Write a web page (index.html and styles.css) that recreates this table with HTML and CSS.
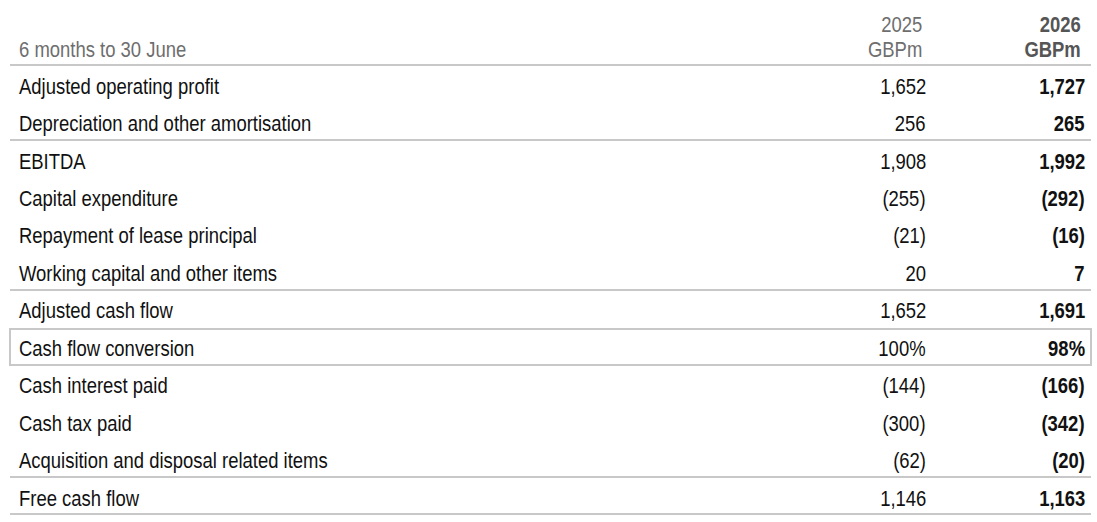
FILE: index.html
```html
<!DOCTYPE html>
<html>
<head>
<meta charset="utf-8">
<link rel="stylesheet" href="styles.css">
</head>
<body>
<div class="cf">
  <div class="row head">
    <div class="lbl"><span>6 months to 30 June</span></div>
    <div class="num prev"><span>2025<br>GBPm</span></div>
    <div class="num cur"><span>2026<br>GBPm</span></div>
  </div>
  <div class="row"><div class="lbl"><span>Adjusted operating profit</span></div><div class="num"><span>1,652</span></div><div class="num cur"><span>1,727</span></div></div>
  <div class="row sep"><div class="lbl"><span>Depreciation and other amortisation</span></div><div class="num"><span>256</span></div><div class="num cur"><span>265</span></div></div>
  <div class="row"><div class="lbl"><span>EBITDA</span></div><div class="num"><span>1,908</span></div><div class="num cur"><span>1,992</span></div></div>
  <div class="row"><div class="lbl"><span>Capital expenditure</span></div><div class="num"><span>(255)</span></div><div class="num cur"><span>(292)</span></div></div>
  <div class="row"><div class="lbl"><span>Repayment of lease principal</span></div><div class="num"><span>(21)</span></div><div class="num cur"><span>(16)</span></div></div>
  <div class="row sep"><div class="lbl"><span>Working capital and other items</span></div><div class="num"><span>20</span></div><div class="num cur"><span>7</span></div></div>
  <div class="row"><div class="lbl"><span>Adjusted cash flow</span></div><div class="num"><span>1,652</span></div><div class="num cur"><span>1,691</span></div></div>
  <div class="row boxed"><div class="lbl"><span>Cash flow conversion</span></div><div class="num"><span>100%</span></div><div class="num cur"><span>98%</span></div></div>
  <div class="row"><div class="lbl"><span>Cash interest paid</span></div><div class="num"><span>(144)</span></div><div class="num cur"><span>(166)</span></div></div>
  <div class="row"><div class="lbl"><span>Cash tax paid</span></div><div class="num"><span>(300)</span></div><div class="num cur"><span>(342)</span></div></div>
  <div class="row sep"><div class="lbl"><span>Acquisition and disposal related items</span></div><div class="num"><span>(62)</span></div><div class="num cur"><span>(20)</span></div></div>
  <div class="row sep"><div class="lbl"><span>Free cash flow</span></div><div class="num"><span>1,146</span></div><div class="num cur"><span>1,163</span></div></div>
</div>
</body>
</html>
```

FILE: styles.css
```css
html, body {
  margin: 0;
  padding: 0;
  background: #ffffff;
}
body {
  padding: 0 6px 0 10px;
  font-family: "Liberation Sans", Arial, sans-serif;
  font-size: 22.5px;
  color: #111111;
}
.cf {
  width: 1081px;
  display: flex;
  flex-direction: column;
}
.row {
  display: grid;
  grid-template-columns: 1fr 152px 159px;
  align-items: center;
  height: 37.45px;
  box-sizing: border-box;
}
.row > div {
  white-space: nowrap;
  line-height: 26px;
}
.row span {
  display: inline-block;
  transform: translateY(1.5px) scaleX(0.82);
}
.lbl {
  padding-left: 9px;
}
.lbl span {
  transform-origin: left center;
}
.num {
  text-align: right;
  padding-right: 6px;
}
.num span {
  transform-origin: right center;
}
.row .cur {
  font-weight: bold;
}
.row.head {
  height: 66px;
  align-items: end;
  padding-bottom: 4px;
  border-bottom: 2px solid #c8c8c8;
  color: #6e6e6e;
}
.row.head > div {
  line-height: 25px;
}
.row.head .num {
  padding-right: 10px;
}
.row.head .cur {
  color: #555555;
}
.row.sep {
  border-bottom: 2px solid #c8c8c8;
}
.row.sep > div {
  position: relative;
  top: 1px;
}
.row.boxed {
  border: 2px solid #c8c8c8;
  margin: 0 -1px;
}
.row.boxed .lbl {
  padding-left: 8px;
}
.row.boxed .num {
  padding-right: 5px;
}
```
